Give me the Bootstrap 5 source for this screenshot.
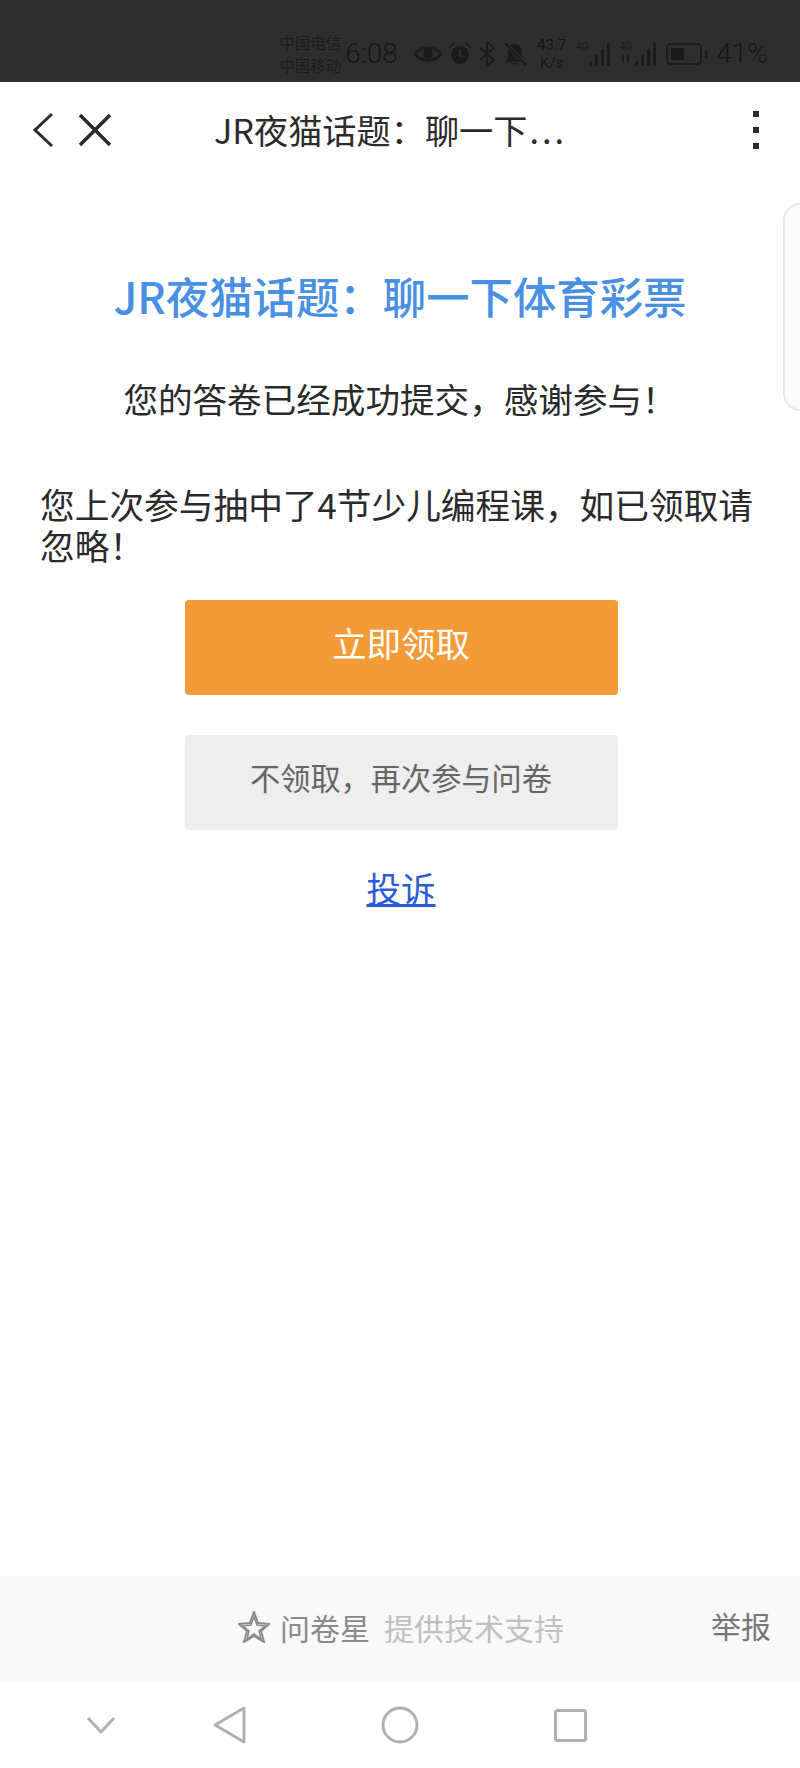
<!DOCTYPE html>
<html lang="zh-CN">
<head>
  <meta charset="UTF-8">
  <title>JR夜猫话题：聊一下体育彩票</title>
  <link href="https://cdn.jsdelivr.net/npm/bootstrap@5.3.0/dist/css/bootstrap.min.css" rel="stylesheet">
  <style>
    body {
      font-family: "Noto Sans CJK SC", "Liberation Sans", sans-serif;
      background: #fff;
      height: 1768px;
      overflow: hidden;
    }
    .screen { height: 1768px; position: relative; }

    /* phone status bar, dark icons on dark background */
    .status-bar { height: 82px; background: #2e2e2e; color: #151515; padding-right: 32px; padding-top: 25px; }
    .carrier { font-size: 15.5px; line-height: 23px; width: 64px; margin-right: 2px; white-space: nowrap; color: #1c1c1c; }
    .clock { font-family: "Roboto", sans-serif; font-weight: 300; font-size: 28px; line-height: 1; width: 60px; margin-right: 9px; }
    .status-eye { margin-right: 6px; }
    .status-gap { margin-right: 7px; }
    .speed { font-family: "Roboto", sans-serif; font-size: 15px; line-height: 18px; width: 33px; text-align: center; margin-left: 1px; }
    .percent { font-family: "Roboto", sans-serif; font-weight: 300; font-size: 28px; line-height: 1; margin-left: 8px; }

    .top-bar { height: 96px; color: #2b2b2b; padding: 0 32px; }
    .top-close { margin-left: 21px; }
    .top-title { font-size: 34.2px; line-height: 1; margin-left: 101px; margin-top: -2px; }
    .top-dots { letter-spacing: 3px; margin-left: 2px; }
    .top-more { margin-right: 8px; }

    .survey-title { color: #4a90e2; font-size: 43.4px; font-weight: 500; line-height: 60px; margin-top: 87px; }
    .thanks { color: #2a2a2a; font-size: 34.6px; line-height: 48px; margin-top: 49px; }
    .prize { color: #2a2a2a; font-size: 34.7px; line-height: 41px; padding: 0 40px; margin-top: 62px; }
    .action-btn { width: 433px; height: 95px; border: 0; border-radius: 4px; line-height: 84px; padding: 0; margin-left: 2px; }
    .btn-claim, .btn-claim:hover { background: #f29b38; color: #fff; font-size: 34.5px; margin-top: 34px; }
    .btn-again, .btn-again:hover { background: #eeeeee; color: #666; font-size: 30.2px; margin-top: 40px; }
    .report-link { color: #2a5bd7; font-size: 34.5px; line-height: 48px; margin-top: 33px; margin-left: 2px; }

    .side-tab {
      position: absolute; right: 0; top: 203px; width: 17px; height: 208px;
      background: #fbfbfb; border: 2px solid #e6e6e6; border-right: 0;
      border-radius: 18px 0 0 18px;
    }

    .page-foot { height: 106px; background: #f9f9f9; font-size: 30px; line-height: 1; position: relative; padding-left: 238px; padding-bottom: 4px; }
    .brand { color: #8a8a8a; margin-left: 10px; }
    .support { color: #c0c0c0; margin-left: 14px; }
    .report { color: #777; position: absolute; right: 29px; top: 34px; }

    .nav-keys { height: 86px; }
  </style>
</head>
<body>
  <div class="screen d-flex flex-column">
    <!-- status bar -->
    <div class="status-bar d-flex justify-content-end align-items-center">
      <div class="carrier">中国电信<br>中国移动</div>
      <div class="clock">6:08</div>
      <svg width="28" height="20" viewBox="0 0 28 20" class="status-eye"><path d="M1 10C6 2 22 2 27 10C22 18 6 18 1 10Z" fill="none" stroke="#1b1b1b" stroke-width="3"/><circle cx="14" cy="10" r="5" fill="#1b1b1b"/></svg>
      <svg width="24" height="24" viewBox="0 0 24 24" class="status-gap"><circle cx="12" cy="13" r="9" fill="#1b1b1b"/><path d="M1 6L6 1M23 6L18 1" fill="none" stroke="#1b1b1b" stroke-width="2"/><path d="M12 8V13L15 15" fill="none" stroke="#2e2e2e" stroke-width="2"/></svg>
      <svg width="17" height="26" viewBox="0 0 17 26" class="status-gap"><path d="M1 7L15 19L8 25V1L15 7L1 19" fill="none" stroke="#1b1b1b" stroke-width="2"/></svg>
      <svg width="24" height="24" viewBox="0 0 24 24" class="status-gap"><path d="M12 2C7 2 5 6 5 11V16L2 20H22L19 16V11C19 6 17 2 12 2ZM9 21C9 23 15 23 15 21Z" fill="#1b1b1b"/><path d="M2 1L23 23" stroke="#2e2e2e" stroke-width="4"/><path d="M2 1L23 23" stroke="#1b1b1b" stroke-width="2"/></svg>
      <div class="speed">43.7<br>K/s</div>
      <svg width="36" height="26" viewBox="0 0 36 26" class="ms-2"><text x="0" y="9" font-size="10" font-family="Roboto, sans-serif" fill="#1b1b1b">4G</text><g fill="#1b1b1b"><rect x="13" y="20" width="3" height="5"/><rect x="19" y="14" width="3" height="11"/><rect x="25" y="8" width="3" height="17"/><rect x="31" y="2" width="3" height="23"/></g></svg>
      <svg width="38" height="26" viewBox="0 0 38 26" class="ms-2"><text x="0" y="9" font-size="10" font-family="Roboto, sans-serif" fill="#1b1b1b">4G</text><path d="M3 14V22M8 14V22" stroke="#1b1b1b" stroke-width="2"/><g fill="#1b1b1b"><rect x="15" y="20" width="3" height="5"/><rect x="21" y="14" width="3" height="11"/><rect x="27" y="8" width="3" height="17"/><rect x="33" y="2" width="3" height="23"/></g></svg>
      <svg width="42" height="22" viewBox="0 0 42 22" class="ms-2"><rect x="1" y="1" width="34" height="20" rx="4" fill="none" stroke="#1b1b1b" stroke-width="2"/><rect x="5" y="5" width="13" height="12" fill="#1b1b1b"/><rect x="39" y="7" width="2.5" height="8" fill="#1b1b1b"/></svg>
      <div class="percent">41%</div>
    </div>

    <!-- browser top bar -->
    <div class="top-bar d-flex align-items-center">
      <svg width="24" height="36" viewBox="0 0 24 36"><path d="M20 2L3 18L20 34" fill="none" stroke="#2b2b2b" stroke-width="3"/></svg>
      <svg width="36" height="36" viewBox="0 0 36 36" class="top-close"><path d="M3 3L33 33M33 3L3 33" fill="none" stroke="#2b2b2b" stroke-width="3.5"/></svg>
      <div class="top-title">JR夜猫话题：聊一下<span class="top-dots">...</span></div>
      <svg width="8" height="38" viewBox="0 0 8 38" class="ms-auto top-more"><g fill="#2b2b2b"><rect x="1" y="0" width="6" height="6"/><rect x="1" y="16" width="6" height="6"/><rect x="1" y="32" width="6" height="6"/></g></svg>
    </div>

    <!-- result content -->
    <div class="flex-grow-1 d-flex flex-column align-items-center">
      <div class="survey-title text-center">JR夜猫话题：聊一下体育彩票</div>
      <div class="thanks text-center">您的答卷已经成功提交，感谢参与！</div>
      <div class="prize w-100">您上次参与抽中了4节少儿编程课，如已领取请忽略！</div>
      <a href="#" class="btn action-btn btn-claim">立即领取</a>
      <a href="#" class="btn action-btn btn-again">不领取，再次参与问卷</a>
      <a href="#" class="report-link">投诉</a>
    </div>

    <div class="side-tab"></div>

    <!-- powered by footer -->
    <div class="page-foot d-flex align-items-center">
      <svg width="32" height="32" viewBox="0 0 32 32"><path d="M16 1L20 12L31 13L23 20L26 31L16 25L6 31L9 20L1 13L12 12Z" fill="none" stroke="#8a8a8a" stroke-width="2" stroke-linejoin="miter"/><path d="M16 6L19 14L27 15L21 20L23 28L16 23L9 28L11 20L5 15L13 14Z" fill="none" stroke="#8a8a8a" stroke-width="1.5"/></svg>
      <span class="brand">问卷星</span>
      <span class="support">提供技术支持</span>
      <span class="report">举报</span>
    </div>

    <!-- android nav keys -->
    <div class="nav-keys position-relative">
      <svg width="800" height="86" viewBox="0 0 800 86" class="d-block">
        <g fill="none" stroke="#b0b0b0" stroke-width="3" stroke-linejoin="round">
          <path d="M88 36L101 50L114 36"/>
          <path d="M244 26L215 43L244 60Z"/>
          <circle cx="400" cy="43" r="17"/>
          <rect x="555.5" y="28.5" width="30" height="30" rx="2"/>
        </g>
      </svg>
    </div>
  </div>

  <script src="https://cdn.jsdelivr.net/npm/bootstrap@5.3.0/dist/js/bootstrap.bundle.min.js"></script>
</body>
</html>
